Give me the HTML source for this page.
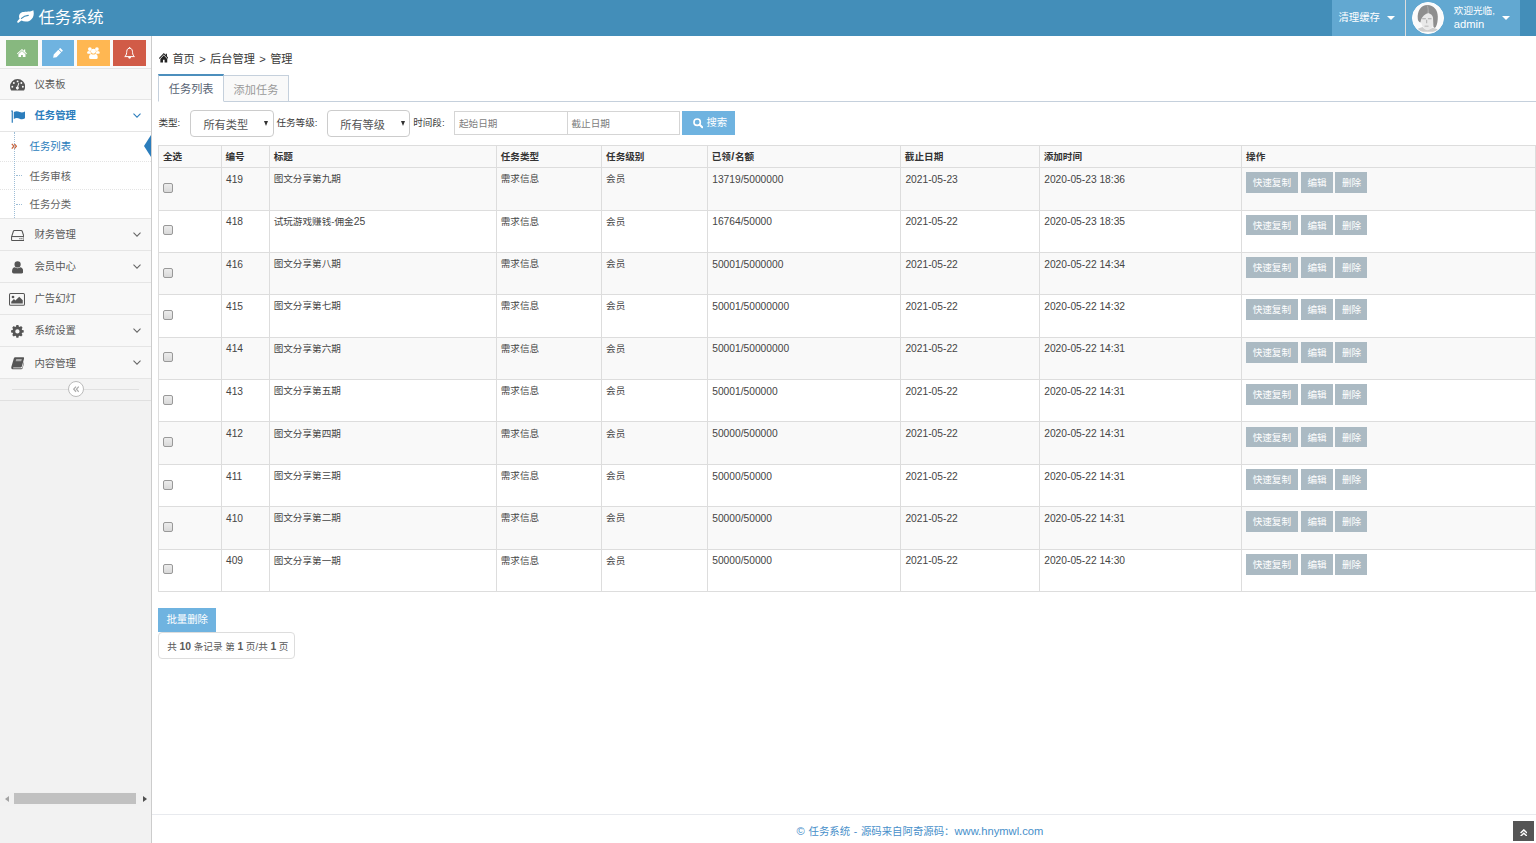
<!DOCTYPE html>
<html lang="zh-CN">
<head>
<meta charset="utf-8">
<title>任务系统</title>
<style>
*{box-sizing:border-box;}
html,body{margin:0;padding:0;}
html{background:#fff;overflow:hidden;}
body{zoom:0.8;width:1920px;height:1053.75px;position:relative;overflow:hidden;background:#fff;
 font-family:"Liberation Sans","Noto Sans CJK SC",sans-serif;font-size:13px;color:#393939;line-height:1.5;}
a{text-decoration:none;color:inherit;}
svg{display:block;}
/* navbar */
.navbar{position:absolute;left:0;top:0;width:1920px;height:45px;background:#438eb9;}
.brand{position:absolute;left:20px;top:0;height:45px;line-height:45px;color:#fff;font-size:20.4px;white-space:nowrap;}
.brand svg{position:absolute;left:1px;top:13px;}
.brand span{position:absolute;left:28px;top:-1px;}
.ace-nav{position:absolute;top:0;height:45px;color:#fff;background:#62a8d1;}
/* sidebar */
.sidebar{position:absolute;left:0;top:45px;width:190px;height:1009px;background:#f2f2f2;border-right:1px solid #ccc;}
.shortcuts{position:absolute;left:0;top:0;width:189px;height:40px;background:#fafafa;}
.shortcuts i{position:absolute;top:5px;width:41px;height:32px;display:block;}
.shortcuts i svg{position:absolute;}
.navwrap{position:absolute;left:0;top:40px;width:189px;}
.nav-list{width:189px;margin:0;padding:0;list-style:none;}
.nav-list>li{position:relative;border-top:1px solid #e5e5e5;display:block;}
.nav-list>li>a{display:block;height:39px;line-height:17px;padding:10px 0 0 7px;background:#f8f8f8;color:#585858;font-size:13px;position:relative;}
.nav-list>li>a .mi{position:absolute;left:7px;top:0;width:30px;height:39px;}
.nav-list>li>a .mi svg{position:absolute;}
.nav-list>li>a .txt{position:absolute;left:43px;top:11.5px;}
.nav-list>li>a .arrow{position:absolute;right:13px;top:16.2px;}
.nav-list>li.open>a{background:#fff;color:#2b7dbc;font-weight:bold;}
.submenu{list-style:none;margin:0;padding:0;background:#fff;border-top:1px solid #e5e5e5;position:relative;}
.submenu:before{content:"";position:absolute;left:18px;top:0;bottom:0;border-left:1px dotted #9dbdd6;z-index:1;}
.submenu>li{position:relative;}
.submenu>li:before{content:"";position:absolute;left:20px;top:18.5px;width:7px;border-top:1px dotted #9dbdd6;z-index:1;}
.submenu>li>a{display:block;position:relative;color:#616161;padding:9px 0 7px 37px;border-top:1px dotted #e4e4e4;line-height:19px;}
.submenu>li:first-child>a{border-top:0;padding-bottom:8px;}
.submenu>li+li>a{padding-bottom:6.5px;}
.submenu>li.active>a{color:#2b7dbc;}
/* main */
.main{position:absolute;left:190px;top:45px;width:1730px;height:1009px;background:#fff;}

/* breadcrumb */
.crumb{position:absolute;left:8px;top:19px;height:20px;line-height:20px;font-size:14px;color:#3a3a3a;white-space:nowrap;word-spacing:1.6px;}
.crumb svg{position:absolute;left:0.5px;top:2.5px;}
.crumb span{position:absolute;left:17.5px;top:0;}
/* tabs */
.tabs{position:absolute;left:8px;top:48px;width:1722px;height:34px;border-bottom:1px solid #c5d0dc;}
.tab{position:absolute;top:1px;height:32px;font-size:14px;line-height:18px;text-align:center;white-space:nowrap;}
.tab.on{left:0;width:82px;top:0;height:34.5px;background:#fff;border:1px solid #c5d0dc;border-top:2.5px solid #4c8fbd;border-bottom:1px solid #fff;color:#576373;padding-top:7.5px;z-index:2;}
.tab.off{left:81px;width:82px;background:#f9f9f9;border:1px solid #c5d0dc;border-bottom:0;color:#999;padding-top:8px;}
/* filter */
.filter{position:absolute;left:8px;top:92px;width:1722px;height:34px;font-size:13px;color:#393939;}
.filter label{position:absolute;top:6.5px;line-height:20px;font-size:12px;white-space:nowrap;}
.sel{position:absolute;top:0;width:104px;height:34px;border:1px solid #ccc;border-radius:4px;background:#fff;font-size:14px;color:#555;line-height:20px;padding:8px 0 0 15px;white-space:nowrap;border-radius:5px;}
.sel:after{content:"";position:absolute;right:5.6px;top:13px;border:3.7px solid transparent;border-top:6.4px solid #333;border-bottom:0;}
.inp{position:absolute;top:2px;width:141.7px;height:29.6px;border:1px solid #d5d5d5;background:#fff;font-size:12px;color:#7d7d7d;line-height:18px;padding:6px 0 0 4.5px;white-space:nowrap;}
.sbtn{position:absolute;left:655px;top:2px;width:66px;height:30px;background:#6fb3e0;color:#fff;font-size:13px;line-height:30px;white-space:nowrap;}
.sbtn svg{position:absolute;left:13px;top:9px;}
.sbtn span{position:absolute;left:30px;top:0;}
/* table */
table.tb{position:absolute;left:8px;top:136px;width:1722px;border-collapse:collapse;table-layout:fixed;font-size:12px;color:#454545;line-height:18px;}
.tb th,.tb td{border:1px solid #ddd;padding:5.25px 4.5px 2.75px;text-align:left;vertical-align:top;white-space:nowrap;overflow:hidden;}
.tb th{font-weight:bold;background:#f9f9f9;color:#333;height:27px;padding-bottom:3.4px;}
.tb td{height:53px;}
.tb tr:nth-child(odd) td{background:#f9f9f9;}
.tb tr:nth-child(even) td{background:#fff;}
.tb td.ck{vertical-align:middle;}
.tb .n{font-size:13px;}
.tb span.n{line-height:0;}
.tb td.n{padding-top:6px;padding-left:5.2px;font-size:12.8px;}
.cb{display:block;width:12.5px;height:12.5px;border:1px solid #999;border-radius:2.5px;background:linear-gradient(#ececec,#d9d9d9);margin:2px 0 0 0.5px;position:relative;top:-3.5px;}
.btn{display:inline-block;height:26px;line-height:28px;overflow:hidden;background:#abbac3;color:#fff;font-size:12px;text-align:center;margin-right:3px;vertical-align:top;}
.b1{width:64.6px;margin-right:4.2px;}
.b2{width:40px;}
/* bottom */
.batch{position:absolute;left:8px;top:715.2px;width:72px;height:29.6px;background:#6fb3e0;color:#fff;font-size:13px;line-height:30px;text-align:center;}
.pager{position:absolute;left:8px;top:745.4px;width:171px;height:33.4px;border:1px solid #ddd;border-radius:5px;font-size:12px;line-height:35px;color:#5a5a5a;text-align:left;padding-left:9.8px;white-space:nowrap;}
.pager b{font-weight:bold;font-size:13px;}
/* footer */
.footer{position:absolute;left:0;top:972px;width:1920px;height:37px;border-top:1px solid #e8eaee;text-align:center;color:#478fca;font-size:13px;line-height:42px;white-space:nowrap;word-spacing:1px;}
.footer span{font-size:14px;}
.scrollup{position:absolute;left:1701.4px;top:981.2px;width:26.1px;height:25px;background:#555;}
.scrollup svg{position:absolute;left:8.2px;top:9.6px;}

.nv1{left:1665px;width:92px;}
.nv1 span{position:absolute;left:8px;top:0;line-height:44px;font-size:13px;white-space:nowrap;}
.caret{position:absolute;top:20px;width:0;height:0;border:5px solid transparent;border-top:5.5px solid #fff;border-bottom:0;}
.nv2{left:1756px;width:144px;border-left:1px solid #ddd;}
.avatar{position:absolute;left:8.2px;top:2.5px;width:40px;height:40px;border-radius:50%;border:2px solid #fff;background:#fbfbfb;overflow:hidden;}
.uinfo{position:absolute;left:60px;top:6.7px;line-height:17px;font-size:14px;white-space:nowrap;}
.uinfo small{display:block;font-size:12px;line-height:15px;}
.collapse{position:relative;width:189px;height:29px;background:#f3f3f3;border-top:1px solid #e5e5e5;border-bottom:1px solid #e0e0e0;}
.collapse:before{content:"";position:absolute;left:15px;right:15px;top:13px;border-top:1px solid #e0e0e0;}
.collapse i{position:absolute;left:85px;top:3px;width:20px;height:20px;border-radius:50%;border:1px solid #bbb;background:#fff;}
.collapse i svg{position:absolute;left:4.6px;top:5px;}
.submenu>li.active:before{display:none;}
.submenu>li.active>a:after{content:"";position:absolute;right:0;top:4.2px;border-style:solid;border-color:transparent #2b7dbc transparent transparent;border-width:14px 9px 14px 0;}
.submenu .dbl{position:absolute;left:13.5px;top:14.5px;}
.hscroll{position:absolute;left:0;top:945px;width:189px;height:17px;background:#f1f1f1;}
.hscroll .thumb{position:absolute;left:17px;top:1.6px;width:153px;height:13px;background:#c1c1c1;}
.hscroll .al{position:absolute;left:6px;top:4.5px;border-style:solid;border-color:transparent #a3a3a3 transparent transparent;border-width:4px 5px 4px 0;}
.hscroll .ar{position:absolute;left:179px;top:4.5px;border-style:solid;border-color:transparent transparent transparent #505050;border-width:4px 0 4px 5px;}
</style>
</head>
<body>
<div class="navbar">
  <a class="brand"><svg width="21" height="16" viewBox="0 0 21 16"><path fill="#fff" d="M20.4,0.2 C21.8,5.6 20.6,10.4 16.4,13 C13,15 8.6,14.9 5.6,13 C4.4,13.8 3.2,15 2,15.8 C0.9,16.4 -0.3,15.5 0.3,14.4 C1,13.2 2.2,12 3.2,11 C1.6,7.6 2.8,3.8 7,2.6 C11,1.4 17,2.6 20.4,0.2 Z"/><path fill="none" stroke="#438eb9" stroke-width="1.5" stroke-linecap="round" d="M5.6,10.4 C8,8.2 10.6,7 14,6.8"/></svg><span>任务系统</span></a>
  <div class="ace-nav nv1"><span>清理缓存</span><i class="caret" style="left:69px"></i></div>
  <div class="ace-nav nv2"><i class="avatar"><svg width="36" height="36" viewBox="0 0 36 36"><defs><filter id="bl" x="-10%" y="-10%" width="120%" height="120%"><feGaussianBlur stdDeviation="0.55"/></filter></defs><rect width="36" height="36" fill="#fbfbfb"/><g filter="url(#bl)"><path fill="#cdcdcd" d="M3,36 C5,32 8,31 12,30 C14,33.5 21,34 24,31 C28,31.5 32,33 34,36 Z"/><path fill="#e9e9e9" d="M9.5,21 C11,17 15,13 19,12 C22,13 24,15 25,18 L25.5,27 C24,31 21,34 18,34 C14,34 10.5,29 9.5,21 Z"/><path fill="#8e8e8e" d="M6,20 C5,10 10,2.5 18,2.5 C26,2.5 31,9 31,17 C31,22 30.5,27 28.5,30 C27.5,31.5 25.5,31 25.5,29 L25,18 C24,15 22,13.5 19,12.5 C15,13.5 11.5,17 10,21 L9.4,24.5 C7.2,23.5 6.2,22 6,20 Z"/><path fill="#a9a9a9" d="M17,3 C18.5,6 18.5,9 18,12.5 L20,12.5 C20,9 19.5,6 18.5,3 Z"/><path fill="#a8a8a8" d="M11.5,19 h4.6 v1.3 h-4.6 Z M18.6,19 h4.6 v1.3 h-4.6 Z M14.4,28.4 h5 v1.1 h-5 Z M16.6,21 h1.1 v4.4 h-1.1 Z"/></g></svg></i><div class="uinfo"><small>欢迎光临,</small><span style="position:relative;top:0.4px">admin</span></div><i class="caret" style="left:120px"></i></div>
</div>
<div class="sidebar">
  <div class="shortcuts"><i style="left:7.1px;background:#87b87f"><svg style="left:14.4px;top:11px" width="12.4" height="10.4" viewBox="0 0 14 11" preserveAspectRatio="none"><path fill="#fff" d="M7,0 L0,5.8 L0.8,6.8 L7,1.7 L13.2,6.8 L14,5.8 L11.6,3.8 L11.6,0.8 L9.9,0.8 L9.9,2.4 Z"/><path fill="#fff" d="M2,6.8 L7,2.7 L12,6.8 L12,11 L8.2,11 L8.2,7.8 L5.8,7.8 L5.8,11 L2,11 Z"/></svg></i><i style="left:52px;background:#6fb3e0"><svg style="left:14.2px;top:9.8px" width="12.6" height="12.6" viewBox="-0.2 -0.4 13.2 13.2"><path fill="#fff" d="M0,12.4 L0.76,7.96 L6.76,1.96 L10.44,5.64 L4.44,11.64 Z M7.5,1.2 L8.76,-0.04 Q9.4,-0.5 10,0.1 L12.3,2.4 Q12.9,3 12.44,3.64 L11.2,4.9 Z"/></svg></i><i style="left:96.5px;background:#ffb752"><svg style="left:12.5px;top:8.8px" width="16" height="15" viewBox="0 0 16 15"><g fill="#fff"><circle cx="3.6" cy="2.6" r="2.3"/><circle cx="12.4" cy="2.6" r="2.3"/><circle cx="8" cy="5.2" r="3.1"/><path d="M0,7.6 Q0,5 2.4,5 Q3.6,5.8 4.6,5.4 Q4.4,7.4 5.4,8.4 L2,8.4 Q0,8.4 0,7.6 Z"/><path d="M16,7.6 Q16,5 13.6,5 Q12.4,5.8 11.4,5.4 Q11.6,7.4 10.6,8.4 L14,8.4 Q16,8.4 16,7.6 Z"/><path d="M2.6,13 Q2.6,9 5.4,8.6 Q8,10.4 10.6,8.6 Q13.4,9 13.4,13 Q13.4,15 11.4,15 L4.6,15 Q2.6,15 2.6,13 Z"/></g></svg></i><i style="left:141.2px;background:#d15b47"><svg style="left:13.5px;top:8.8px" width="14" height="15" viewBox="0 0 14 15"><path fill="none" stroke="#fff" stroke-width="1.25" stroke-linejoin="round" d="M7,1.4 C3.6,1.6 3.4,5 3.3,7 C3.2,9.6 2.2,11 0.9,12 L13.1,12 C11.8,11 10.8,9.6 10.7,7 C10.6,5 10.4,1.6 7,1.4 Z"/><circle cx="7" cy="0.9" r="0.9" fill="#fff"/><path fill="#fff" d="M5.2,12.6 L8.8,12.6 Q8.6,14.8 7,14.8 Q5.4,14.8 5.2,12.6 Z"/></svg></i></div>
  <div class="navwrap"><ul class="nav-list">
    <li><a style="height:38px"><i class="mi"><svg style="left:5.5px;top:13.1px" width="19" height="14.5" viewBox="0 0 19 14.5"><path fill="#555" d="M9.5,0 A9.5,9.5 0 0 1 19,9.5 Q19,12.2 17.7,14 Q17.4,14.5 16.8,14.5 L2.2,14.5 Q1.6,14.5 1.3,14 Q0,12.2 0,9.5 A9.5,9.5 0 0 1 9.5,0 Z"/><g fill="#f8f8f8"><circle cx="2.9" cy="9.6" r="1.2"/><circle cx="4.8" cy="5" r="1.2"/><circle cx="9.5" cy="3" r="1.2"/><circle cx="14.2" cy="5" r="1.2"/><circle cx="16.1" cy="9.6" r="1.2"/><path d="M10.6,4.6 L11.6,4.9 L10.3,9.6 A1.9,1.9 0 1 1 8.9,9.3 Z"/></g></svg></i><span class="txt" style="top:11px">仪表板</span></a></li>
    <li class="open"><a style="height:38px"><i class="mi"><svg style="left:6.5px;top:12.3px" width="18" height="16" viewBox="0 0 17 16" preserveAspectRatio="none"><path fill="#2b7dbc" d="M0.2,1.2 a1.1,1.1 0 1 1 2,0.9 L2.2,16 L0.8,16 L0.8,2.1 Q0.3,1.8 0.2,1.2 Z"/><path fill="#2b7dbc" d="M3.3,2.6 C6,0.8 8,1.4 10.4,2.6 C12.6,3.6 14.6,3 16.4,1.8 Q17,1.5 17,2.2 L17,9.6 Q17,10.1 16.5,10.4 C14.4,11.8 12.4,12 10.2,10.9 C8,9.8 5.8,9.6 3.3,11.2 Z"/></svg></i><span class="txt" style="top:10.6px">任务管理</span><svg class="arrow" width="10" height="6.5" viewBox="0 0 10 6.5"><path fill="none" stroke="#2b7dbc" stroke-width="1.3" d="M0.6,0.8 L5,5.2 L9.4,0.8"/></svg></a>
      <ul class="submenu">
        <li class="active"><a><svg class="dbl" width="8" height="8" viewBox="0 0 8 8"><path fill="none" stroke="#c86139" stroke-width="1.5" d="M1,1 L3.6,4 L1,7 M4.2,1 L6.8,4 L4.2,7"/></svg>任务列表</a></li>
        <li><a>任务审核</a></li>
        <li><a>任务分类</a></li>
      </ul>
    </li>
    <li><a><i class="mi"><svg style="left:6.5px;top:14.3px" width="17" height="14" viewBox="0 0 17 14"><path fill="none" stroke="#555" stroke-width="1.3" stroke-linejoin="round" d="M0.7,8.6 L3,1.6 Q3.3,0.7 4.2,0.7 L12.8,0.7 Q13.7,0.7 14,1.6 L16.3,8.6 L16.3,12 Q16.3,13.3 15,13.3 L2,13.3 Q0.7,13.3 0.7,12 Z"/><path fill="none" stroke="#555" stroke-width="1.3" d="M0.9,8.2 L16.1,8.2"/><circle cx="11.2" cy="10.8" r="0.8" fill="#555"/><circle cx="13.6" cy="10.8" r="0.8" fill="#555"/></svg></i><span class="txt">财务管理</span><svg class="arrow" width="10" height="6.5" viewBox="0 0 10 6.5"><path fill="none" stroke="#666" stroke-width="1.3" d="M0.6,0.8 L5,5.2 L9.4,0.8"/></svg></a></li>
    <li><a><i class="mi"><svg style="left:8.0px;top:12.3px" width="14" height="16" viewBox="0 0 14 16"><path fill="#555" d="M7,0.4 A3.9,3.9 0 0 1 7,8.2 A3.9,3.9 0 0 1 7,0.4 Z M0,13.4 C0,9.4 1.6,7.8 3.6,7.7 C4.6,8.7 5.8,9.1 7,9.1 C8.2,9.1 9.4,8.7 10.4,7.7 C12.4,7.8 14,9.4 14,13.4 Q14,15.6 11.8,15.6 L2.2,15.6 Q0,15.6 0,13.4 Z"/></svg></i><span class="txt">会员中心</span><svg class="arrow" width="10" height="6.5" viewBox="0 0 10 6.5"><path fill="none" stroke="#666" stroke-width="1.3" d="M0.6,0.8 L5,5.2 L9.4,0.8"/></svg></a></li>
    <li><a><i class="mi"><svg style="left:4.3px;top:12.3px" width="20" height="16" viewBox="0 0 20 16"><rect x="0.65" y="0.65" width="18.7" height="14.7" rx="1.4" fill="none" stroke="#555" stroke-width="1.3"/><circle cx="5" cy="5" r="1.7" fill="#555"/><path fill="#555" d="M2.8,13.2 L2.8,11 L6.2,7.6 L8,9.4 L12.8,4.6 L17.2,9 L17.2,13.2 Z"/></svg></i><span class="txt">广告幻灯</span></a></li>
    <li><a><i class="mi"><svg style="left:7.0px;top:12.3px" width="16" height="16" viewBox="0 0 16 16"><path fill="#555" fill-rule="evenodd" d="M6.7,0 L9.3,0 L9.7,2 L10.9,2.5 L12.6,1.4 L14.5,3.3 L13.4,5 L13.9,6.2 L15.9,6.6 L15.9,9.3 L13.9,9.7 L13.4,10.9 L14.5,12.6 L12.6,14.5 L10.9,13.4 L9.7,13.9 L9.3,15.9 L6.7,15.9 L6.3,13.9 L5.1,13.4 L3.4,14.5 L1.5,12.6 L2.6,10.9 L2.1,9.7 L0.1,9.3 L0.1,6.6 L2.1,6.2 L2.6,5 L1.5,3.3 L3.4,1.4 L5.1,2.5 L6.3,2 Z M8,5.3 A2.7,2.7 0 1 0 8,10.7 A2.7,2.7 0 1 0 8,5.3 Z"/></svg></i><span class="txt">系统设置</span><svg class="arrow" width="10" height="6.5" viewBox="0 0 10 6.5"><path fill="none" stroke="#666" stroke-width="1.3" d="M0.6,0.8 L5,5.2 L9.4,0.8"/></svg></a></li>
    <li><a style="height:38px"><i class="mi"><svg style="left:6.5px;top:12.3px" width="17" height="16" viewBox="0 0 17 16"><path fill="#555" d="M5.2,0.4 L15.4,0.4 Q16.8,0.4 16.4,1.8 L13.6,12 Q13.3,13 12.2,13 L3,13 Q2.2,13.6 3,14.2 L12.6,14.2 Q13.8,14.2 14.2,13 L16.6,4.4 Q17,4.6 16.9,5.4 L14.6,13.8 Q14.2,15.4 12.6,15.4 L2.4,15.4 Q0,15.2 0.4,12.6 L3.6,1.6 Q4,0.4 5.2,0.4 Z"/><path fill="#aaa" d="M6.6,2.6 L13.6,2.6 L12.8,5.2 L5.8,5.2 Z"/></svg></i><span class="txt">内容管理</span><svg class="arrow" width="10" height="6.5" viewBox="0 0 10 6.5"><path fill="none" stroke="#666" stroke-width="1.3" d="M0.6,0.8 L5,5.2 L9.4,0.8"/></svg></a></li>
  </ul>
  <div class="collapse"><i><svg width="8" height="8" viewBox="0 0 8 8"><path fill="none" stroke="#aaa" stroke-width="1.5" d="M3.8,0.8 L0.9,4 L3.8,7.2 M7.2,0.8 L4.3,4 L7.2,7.2"/></svg></i></div></div>
  <div class="hscroll"><i class="al"></i><div class="thumb"></div><i class="ar"></i></div>
</div>
<div class="main">
  <div class="crumb"><svg width="12" height="12" viewBox="0 0 14 11" preserveAspectRatio="none"><path fill="#222" d="M7,0 L0,5.8 L0.8,6.8 L7,1.7 L13.2,6.8 L14,5.8 L11.6,3.8 L11.6,0.8 L9.9,0.8 L9.9,2.4 Z"/><path fill="#222" d="M2,6.8 L7,2.7 L12,6.8 L12,11 L8.2,11 L8.2,7.8 L5.8,7.8 L5.8,11 L2,11 Z"/></svg><span>首页 &gt; 后台管理 &gt; 管理</span></div>
  <div class="tabs">
    <a class="tab on">任务列表</a>
    <a class="tab off">添加任务</a>
  </div>
  <div class="filter">
    <label style="left:0">类型:</label>
    <div class="sel" style="left:40px">所有类型</div>
    <label style="left:147.5px">任务等级:</label>
    <div class="sel" style="left:211px">所有等级</div>
    <label style="left:318.5px">时间段:</label>
    <div class="inp" style="left:370px">起始日期</div>
    <div class="inp" style="left:510.7px">截止日期</div>
    <a class="sbtn"><svg width="13" height="13" viewBox="0 0 13 13"><circle cx="5.2" cy="5.2" r="4" fill="none" stroke="#fff" stroke-width="2"/><path stroke="#fff" stroke-width="2.4" stroke-linecap="round" d="M8.4,8.4 L11.6,11.6"/></svg><span>搜索</span></a>
  </div>
  <table class="tb">
    <colgroup><col style="width:78px"><col style="width:60.4px"><col style="width:283.8px"><col style="width:131.7px"><col style="width:132px"><col style="width:241.5px"><col style="width:173.5px"><col style="width:253px"><col></colgroup>
    <thead>
      <tr><th>全选</th><th>编号</th><th>标题</th><th>任务类型</th><th>任务级别</th><th>已领<span style="font-size:14px;margin:0 0.6px;line-height:0">/</span>名额</th><th>截止日期</th><th>添加时间</th><th>操作</th></tr>
    </thead>
    <tbody>
      <tr><td class="ck"><i class="cb"></i></td><td class="n">419</td><td>图文分享第九期</td><td>需求信息</td><td>会员</td><td class="n">13719/5000000</td><td class="n">2021-05-23</td><td class="n">2020-05-23 18:36</td><td><a class="btn b1">快速复制</a><a class="btn b2">编辑</a><a class="btn b2">删除</a></td></tr>
      <tr><td class="ck"><i class="cb"></i></td><td class="n">418</td><td>试玩游戏赚钱-佣金<span class="n">25</span></td><td>需求信息</td><td>会员</td><td class="n">16764/50000</td><td class="n">2021-05-22</td><td class="n">2020-05-23 18:35</td><td><a class="btn b1">快速复制</a><a class="btn b2">编辑</a><a class="btn b2">删除</a></td></tr>
      <tr><td class="ck"><i class="cb"></i></td><td class="n">416</td><td>图文分享第八期</td><td>需求信息</td><td>会员</td><td class="n">50001/5000000</td><td class="n">2021-05-22</td><td class="n">2020-05-22 14:34</td><td><a class="btn b1">快速复制</a><a class="btn b2">编辑</a><a class="btn b2">删除</a></td></tr>
      <tr><td class="ck"><i class="cb"></i></td><td class="n">415</td><td>图文分享第七期</td><td>需求信息</td><td>会员</td><td class="n">50001/50000000</td><td class="n">2021-05-22</td><td class="n">2020-05-22 14:32</td><td><a class="btn b1">快速复制</a><a class="btn b2">编辑</a><a class="btn b2">删除</a></td></tr>
      <tr><td class="ck"><i class="cb"></i></td><td class="n">414</td><td>图文分享第六期</td><td>需求信息</td><td>会员</td><td class="n">50001/50000000</td><td class="n">2021-05-22</td><td class="n">2020-05-22 14:31</td><td><a class="btn b1">快速复制</a><a class="btn b2">编辑</a><a class="btn b2">删除</a></td></tr>
      <tr><td class="ck"><i class="cb"></i></td><td class="n">413</td><td>图文分享第五期</td><td>需求信息</td><td>会员</td><td class="n">50001/500000</td><td class="n">2021-05-22</td><td class="n">2020-05-22 14:31</td><td><a class="btn b1">快速复制</a><a class="btn b2">编辑</a><a class="btn b2">删除</a></td></tr>
      <tr><td class="ck"><i class="cb"></i></td><td class="n">412</td><td>图文分享第四期</td><td>需求信息</td><td>会员</td><td class="n">50000/500000</td><td class="n">2021-05-22</td><td class="n">2020-05-22 14:31</td><td><a class="btn b1">快速复制</a><a class="btn b2">编辑</a><a class="btn b2">删除</a></td></tr>
      <tr><td class="ck"><i class="cb"></i></td><td class="n">411</td><td>图文分享第三期</td><td>需求信息</td><td>会员</td><td class="n">50000/50000</td><td class="n">2021-05-22</td><td class="n">2020-05-22 14:31</td><td><a class="btn b1">快速复制</a><a class="btn b2">编辑</a><a class="btn b2">删除</a></td></tr>
      <tr><td class="ck"><i class="cb"></i></td><td class="n">410</td><td>图文分享第二期</td><td>需求信息</td><td>会员</td><td class="n">50000/50000</td><td class="n">2021-05-22</td><td class="n">2020-05-22 14:31</td><td><a class="btn b1">快速复制</a><a class="btn b2">编辑</a><a class="btn b2">删除</a></td></tr>
      <tr><td class="ck"><i class="cb"></i></td><td class="n">409</td><td>图文分享第一期</td><td>需求信息</td><td>会员</td><td class="n">50000/50000</td><td class="n">2021-05-22</td><td class="n">2020-05-22 14:30</td><td><a class="btn b1">快速复制</a><a class="btn b2">编辑</a><a class="btn b2">删除</a></td></tr>
    </tbody>
  </table>
  <a class="batch">批量删除</a>
  <div class="pager">共 <b>10</b> 条记录 第 <b>1</b> 页/共 <b>1</b> 页</div>
  <div class="footer"><span>©</span> 任务系统 - 源码来自阿奇源码：<span>www.hnymwl.com</span></div>
  <a class="scrollup"><svg width="9.6" height="9.6" viewBox="0 0 10 10"><path fill="none" stroke="#fff" stroke-width="1.9" d="M0.8,5.2 L5,1.2 L9.2,5.2 M0.8,9.4 L5,5.4 L9.2,9.4"/></svg></a>
</div>
</body>
</html>
